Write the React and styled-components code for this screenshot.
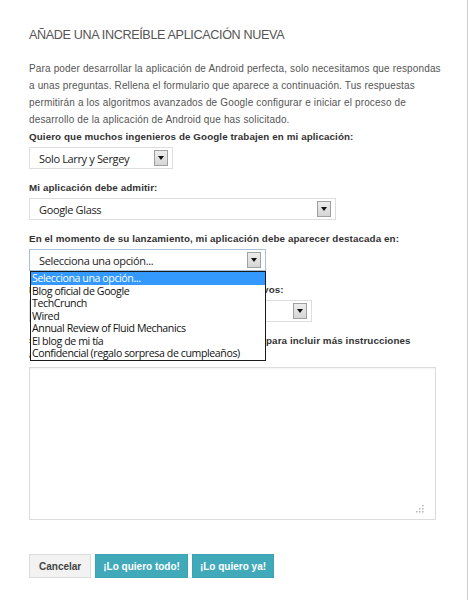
import React from 'react';
import styled, { createGlobalStyle } from 'styled-components';

const GlobalStyle = createGlobalStyle`
  html, body {
    margin: 0;
    padding: 0;
    background: #fff;
  }
`;

const Page = styled.div`
  width: 467px;
  min-height: 600px;
  border-right: 1px solid #cfcfcf;
  box-sizing: content-box;
  font-family: 'Liberation Sans', Arial, sans-serif;
  color: #444;
`;

const Form = styled.form`
  padding: 26px 20px 0 29px;
`;

const Title = styled.h1`
  margin: 0;
  font-size: 12.6px;
  line-height: 18px;
  font-weight: normal;
  letter-spacing: -0.35px;
  color: #555;
  text-transform: uppercase;
`;

const Intro = styled.p`
  margin: 16px 0 2px;
  font-size: 10px;
  line-height: 17px;
  letter-spacing: 0.15px;
  color: #555;
`;

const Field = styled.div`
  margin-bottom: 12px;
`;

const Label = styled.label`
  display: block;
  font-size: 9.8px;
  line-height: 14px;
  font-weight: bold;
  letter-spacing: 0.1px;
  color: #333;
  margin-bottom: ${(p) => p.$gap ?? 3}px;
`;

const SelectWrap = styled.div`
  position: relative;
  width: ${(p) => p.$width}px;
`;

const SelectBox = styled.div`
  height: 22px;
  box-sizing: border-box;
  display: flex;
  align-items: center;
  justify-content: space-between;
  padding: 0 4px 0 9px;
  background: #fff;
  border: 1px solid ${(p) => (p.$focused ? '#a9c1d6' : '#dedede')};
  font-family: 'Open Sans', 'Noto Sans', sans-serif;
  font-size: 11px;
  letter-spacing: -0.35px;
  color: #222;
`;

const ArrowButton = styled.span`
  width: 14px;
  height: 16px;
  box-sizing: border-box;
  display: flex;
  align-items: center;
  justify-content: center;
  border: 1px solid #a0a0a0;
  background: linear-gradient(#ececec, #d6d6d6);
`;

const OptionList = styled.ul`
  position: absolute;
  top: 100%;
  left: 1px;
  right: 0;
  margin: 0;
  padding: 0;
  list-style: none;
  background: #fff;
  border: 1px solid #1a1a1a;
  z-index: 5;
  font-family: 'Open Sans', 'Noto Sans', sans-serif;
  font-size: 10.6px;
  letter-spacing: -0.4px;
  color: #111;
`;

const Option = styled.li`
  height: 12.5px;
  line-height: 12.5px;
  padding-left: 1px;
  white-space: nowrap;
  background: ${(p) => (p.$active ? '#3399ff' : 'transparent')};
  color: ${(p) => (p.$active ? '#fff' : '#111')};
`;

const TextArea = styled.div`
  position: relative;
  width: 407px;
  height: 153px;
  box-sizing: border-box;
  border: 1px solid #dcdcdc;
  box-shadow: inset 0 1px 2px rgba(0, 0, 0, 0.05);
  margin-top: 5px;
`;

const Grip = styled.svg`
  position: absolute;
  right: 11px;
  bottom: 6px;
`;

const Actions = styled.div`
  display: flex;
  gap: 4px;
  margin-top: 34px;
`;

const Button = styled.button`
  height: 24px;
  padding: 0 ${(p) => (p.$primary ? 7 : 9)}px;
  border: 1px solid ${(p) => (p.$primary ? '#3ba4b4' : '#dcdcdc')};
  background: ${(p) => (p.$primary ? '#40a9ba' : '#f2f2f2')};
  color: ${(p) => (p.$primary ? '#fff' : '#444')};
  font-family: 'Liberation Sans', Arial, sans-serif;
  font-size: 10px;
  font-weight: bold;
  cursor: pointer;
`;

function Arrow() {
  return (
    <ArrowButton>
      <svg width="6" height="4" viewBox="0 0 6 4">
        <polygon points="0,0 6,0 3,4" fill="#111" />
      </svg>
    </ArrowButton>
  );
}

function Select({ width, value, focused, children }) {
  return (
    <SelectWrap $width={width}>
      <SelectBox $focused={focused}>
        <span>{value}</span>
        <Arrow />
      </SelectBox>
      {children}
    </SelectWrap>
  );
}

const outlets = [
  'Selecciona una opción...',
  'Blog oficial de Google',
  'TechCrunch',
  'Wired',
  'Annual Review of Fluid Mechanics',
  'El blog de mi tía',
  'Confidencial (regalo sorpresa de cumpleaños)',
];

export default function App() {
  return (
    <>
      <GlobalStyle />
      <Page>
        <Form onSubmit={(e) => e.preventDefault()}>
          <Title>Añade una increíble aplicación nueva</Title>
          <Intro>
            Para poder desarrollar la aplicación de Android perfecta, solo necesitamos que respondas
            a unas preguntas. Rellena el formulario que aparece a continuación. Tus respuestas
            permitirán a los algoritmos avanzados de Google configurar e iniciar el proceso de
            desarrollo de la aplicación de Android que has solicitado.
          </Intro>

          <Field>
            <Label>Quiero que muchos ingenieros de Google trabajen en mi aplicación:</Label>
            <Select width={144} value="Solo Larry y Sergey" />
          </Field>

          <Field>
            <Label>Mi aplicación debe admitir:</Label>
            <Select width={307} value="Google Glass" />
          </Field>

          <Field>
            <Label>En el momento de su lanzamiento, mi aplicación debe aparecer destacada en:</Label>
            <Select width={237} value="Selecciona una opción..." focused>
              <OptionList>
                {outlets.map((o, i) => (
                  <Option key={o} $active={i === 0}>
                    {o}
                  </Option>
                ))}
              </OptionList>
            </Select>
          </Field>

          <Field>
            <Label>Mi aplicación deberá funcionar en estos dispositivos:</Label>
            <Select width={283} value="Todos" />
          </Field>

          <Label $gap={0}>
            Si lo deseas, puedes utilizar el espacio de debajo para incluir más instrucciones
            <br />
            adicionales:
          </Label>
          <TextArea>
            <Grip width="8" height="8" viewBox="0 0 8 8">
              <g fill="#b5b5b5">
                <rect x="6" y="0" width="1.5" height="1.5" />
                <rect x="3" y="3" width="1.5" height="1.5" />
                <rect x="6" y="3" width="1.5" height="1.5" />
                <rect x="0" y="6" width="1.5" height="1.5" />
                <rect x="3" y="6" width="1.5" height="1.5" />
                <rect x="6" y="6" width="1.5" height="1.5" />
              </g>
            </Grip>
          </TextArea>

          <Actions>
            <Button type="button">Cancelar</Button>
            <Button type="submit" $primary>¡Lo quiero todo!</Button>
            <Button type="submit" $primary>¡Lo quiero ya!</Button>
          </Actions>
        </Form>
      </Page>
    </>
  );
}
